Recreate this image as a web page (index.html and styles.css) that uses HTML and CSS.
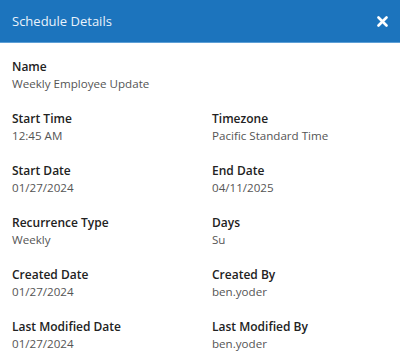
FILE: index.html
```html
<!DOCTYPE html>
<html>
<head>
<meta charset="utf-8">
<link rel="stylesheet" href="styles.css">
</head>
<body>
<div class="dialog">
  <div class="header">
    <span class="title">Schedule Details</span>
    <svg class="close" width="11" height="11" viewBox="0 0 11 11"><path d="M1.5 1.5 L9.5 9.5 M9.5 1.5 L1.5 9.5" stroke="#fff" stroke-width="2.6" stroke-linecap="round"/></svg>
  </div>
  <div class="body">
    <div class="field full"><div class="label">Name</div><div class="value">Weekly Employee Update</div></div>
    <div class="field"><div class="label">Start Time</div><div class="value">12:45 AM</div></div>
    <div class="field"><div class="label">Timezone</div><div class="value">Pacific Standard Time</div></div>
    <div class="field"><div class="label">Start Date</div><div class="value">01/27/2024</div></div>
    <div class="field"><div class="label">End Date</div><div class="value">04/11/2025</div></div>
    <div class="field"><div class="label">Recurrence Type</div><div class="value">Weekly</div></div>
    <div class="field"><div class="label">Days</div><div class="value">Su</div></div>
    <div class="field"><div class="label">Created Date</div><div class="value">01/27/2024</div></div>
    <div class="field"><div class="label">Created By</div><div class="value">ben.yoder</div></div>
    <div class="field"><div class="label">Last Modified Date</div><div class="value">01/27/2024</div></div>
    <div class="field"><div class="label">Last Modified By</div><div class="value">ben.yoder</div></div>
  </div>
</div>
</body>
</html>
```
FILE: styles.css
```css
html, body { margin: 0; padding: 0; background: #fff; }
body { font-family: "Open Sans", "Liberation Sans", sans-serif; width: 400px; height: 364px; overflow: hidden; }
.header {
  height: 43px;
  background: #1c74bd;
  border-bottom: 1px solid #5d9fd6;
  display: flex;
  align-items: center;
  justify-content: space-between;
  padding: 0 12px 0 12px;
  box-sizing: border-box;
}
.title { color: #e9f2fb; font-size: 13px; }
.close { margin-right: 0; margin-top: 1px; }
.body {
  display: grid;
  grid-template-columns: 200px 188px;
  row-gap: 18px;
  padding: 15px 0 0 12px;
}
.field.full { grid-column: 1 / span 2; }
.label { font-size: 12px; font-weight: 600; color: #222; line-height: 17px; }
.value { font-size: 11.6px; color: #555; line-height: 17px; }
```
